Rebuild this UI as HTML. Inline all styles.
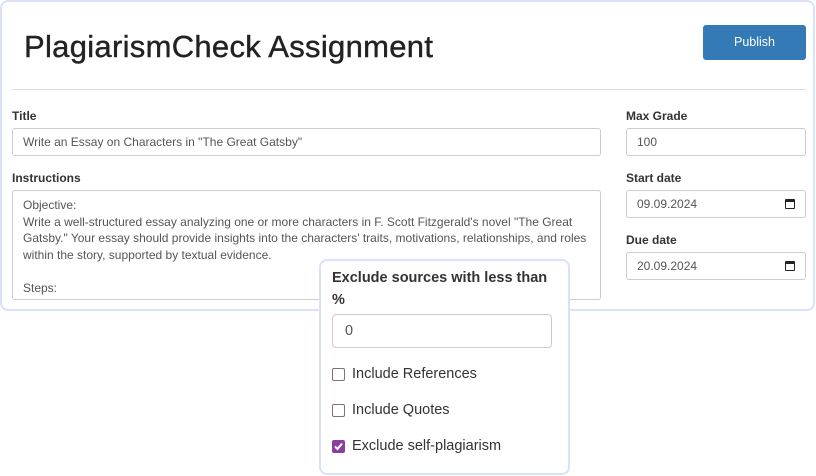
<!DOCTYPE html>
<html><head><style>
*{box-sizing:border-box;margin:0;padding:0}
body{width:816px;height:476px;background:#fff;font-family:"Liberation Sans",Arial,sans-serif;position:relative;overflow:hidden;color:#333}
.card{position:absolute;left:0;top:0;width:815px;height:311px;border:2px solid #d9e2fa;border-radius:8px;background:#fff}
.a{position:absolute}
h1{position:absolute;left:24px;top:29px;font-size:31px;font-weight:normal;color:#222;letter-spacing:0.3px;-webkit-text-stroke:0.4px #222}
.btn{position:absolute;left:703px;top:25px;width:103px;height:35px;background:#337ab7;border-radius:3px;color:#fff;font-size:12.5px;text-align:center;line-height:35px}
.hr{position:absolute;left:12px;top:89px;width:794px;height:1px;background:#ddd}
.lbl{position:absolute;font-size:12px;font-weight:bold;color:#333}
.inp{position:absolute;border:1px solid #ccc;border-radius:3px;background:#fff;font-size:12px;color:#555;padding-left:10px;line-height:26px}
.cal{position:absolute;right:10px;top:8px;width:10px;height:10px;border:1.5px solid #222;border-top-width:3px;border-radius:1px}
.ta{position:absolute;left:12px;top:190px;width:589px;height:110px;border:1px solid #ccc;border-radius:3px;overflow:hidden;font-size:12px;line-height:16.6px;color:#555;padding:6px 10px}
.pop{position:absolute;left:319px;top:259px;width:251px;height:216px;border:2px solid #d9e2fa;border-radius:8px;background:#fff}
.cb{position:absolute;left:332px;width:13px;height:13px;border:1px solid #767676;border-radius:2px;background:#fff}
.ct{position:absolute;left:352px;font-size:14.5px;color:#333}
</style></head><body>
<div class="card"></div>
<h1>PlagiarismCheck Assignment</h1>
<div class="btn">Publish</div>
<div class="hr"></div>
<div class="lbl" style="left:12px;top:109px">Title</div>
<div class="inp" style="left:12px;top:128px;width:589px;height:28px">Write an Essay on Characters in "The Great Gatsby"</div>
<div class="lbl" style="left:626px;top:109px">Max Grade</div>
<div class="inp" style="left:626px;top:128px;width:180px;height:28px">100</div>
<div class="lbl" style="left:12px;top:171px">Instructions</div>
<div class="ta">Objective:<br>Write a well-structured essay analyzing one or more characters in F. Scott Fitzgerald's novel "The Great Gatsby." Your essay should provide insights into the characters' traits, motivations, relationships, and roles within the story, supported by textual evidence.<br><br>Steps:<br>1. Choose Your Focus</div>
<div class="lbl" style="left:626px;top:171px">Start date</div>
<div class="inp" style="left:626px;top:190px;width:180px;height:28px">09.09.2024<span class="cal"></span></div>
<div class="lbl" style="left:626px;top:233px">Due date</div>
<div class="inp" style="left:626px;top:252px;width:180px;height:28px">20.09.2024<span class="cal"></span></div>
<div class="pop"></div>
<div class="a" style="left:332px;top:268px;font-size:14.5px;font-weight:bold;line-height:21.5px;width:230px;color:#333">Exclude sources with less than<br>%</div>
<div class="inp" style="left:332px;top:314px;width:220px;height:34px;line-height:32px;font-size:14.5px;padding-left:12px;border-radius:4px">0</div>
<div class="cb" style="top:368px"></div><div class="ct" style="top:366px">Include References</div>
<div class="cb" style="top:404px"></div><div class="ct" style="top:402px">Include Quotes</div>
<div class="cb" style="top:440px;background:#8a3ea0;border-color:#8a3ea0"><svg width="11" height="11" viewBox="0 0 11 11" style="position:absolute;left:0;top:0"><path d="M2 5.5L4.5 8L9 2.5" stroke="#fff" stroke-width="2" fill="none"/></svg></div><div class="ct" style="top:438px">Exclude self-plagiarism</div>
</body></html>
